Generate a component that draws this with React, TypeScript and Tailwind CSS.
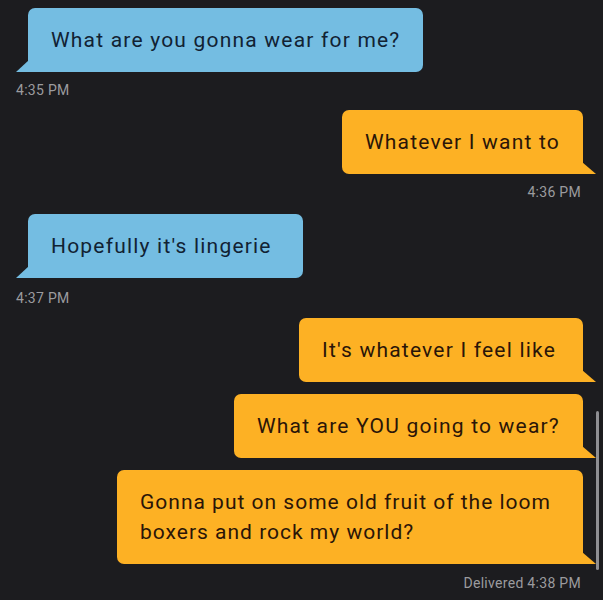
import React from 'react';

const Tail: React.FC<{ side: 'in' | 'out' }> = ({ side }) =>
  side === 'in' ? (
    <svg className="absolute bottom-0 -left-[12px]" width="13" height="12" viewBox="0 0 13 12">
      <polygon points="13,0 13,12 0,12" fill="#74bde2" />
    </svg>
  ) : (
    <svg className="absolute bottom-0 -right-[13px]" width="14" height="12" viewBox="0 0 14 12">
      <polygon points="0,0 0,12 14,12" fill="#fdb124" />
    </svg>
  );

const Bubble: React.FC<{ side: 'in' | 'out'; className?: string; children: React.ReactNode }> = ({ side, className = '', children }) => (
  <div
    className={`relative rounded-[7px] px-[23px] py-[17px] text-[21px] leading-[30px] tracking-[1.2px] ${
      side === 'in' ? 'bg-[#74bde2] text-[#112233] rounded-bl-none' : 'bg-[#fdb124] text-[#2a1508] rounded-br-none'
    } ${className}`}
  >
    {children}
    <Tail side={side} />
  </div>
);

const Stamp: React.FC<{ right?: boolean; className?: string; children: React.ReactNode }> = ({ right, className = '', children }) => (
  <div className={`h-4 text-[14px] leading-4 tracking-[0.3px] text-[#9b9b9e] ${right ? 'self-end pr-[22px]' : 'pl-4'} ${className}`}>{children}</div>
);

export default function App() {
  return (
    <div className="relative w-[603px] h-[600px] overflow-hidden bg-[#1c1c1f] font-['Roboto',sans-serif]">
      <div className="flex flex-col pt-2">
        <div className="pl-[28px] flex">
          <Bubble side="in">What are you gonna wear for me?</Bubble>
        </div>
        <Stamp className="mt-[10px]">4:35 PM</Stamp>

        <div className="pr-[20px] mt-3 flex justify-end">
          <Bubble side="out">Whatever I want to</Bubble>
        </div>
        <Stamp right className="mt-[10px]">4:36 PM</Stamp>

        <div className="pl-[28px] mt-[14px] flex">
          <Bubble side="in" className="w-[275px]">Hopefully it's lingerie</Bubble>
        </div>
        <Stamp className="mt-3">4:37 PM</Stamp>

        <div className="pr-[20px] mt-3 flex justify-end">
          <Bubble side="out" className="w-[284px]">It's whatever I feel like</Bubble>
        </div>
        <div className="pr-[20px] mt-3 flex justify-end">
          <Bubble side="out">What are YOU going to wear?</Bubble>
        </div>
        <div className="pr-[20px] mt-3 flex justify-end">
          <Bubble side="out" className="w-[466px] tracking-[1px]">
            Gonna put on some old fruit of the loom
            <br />
            boxers and rock my world?
          </Bubble>
        </div>
        <Stamp right className="mt-[11px]">Delivered 4:38 PM</Stamp>
      </div>
      {/* scrollbar */}
      <div className="absolute left-[596px] top-[411px] w-[3px] h-[159px] rounded-full bg-[#8e8e92]" />
    </div>
  );
}
